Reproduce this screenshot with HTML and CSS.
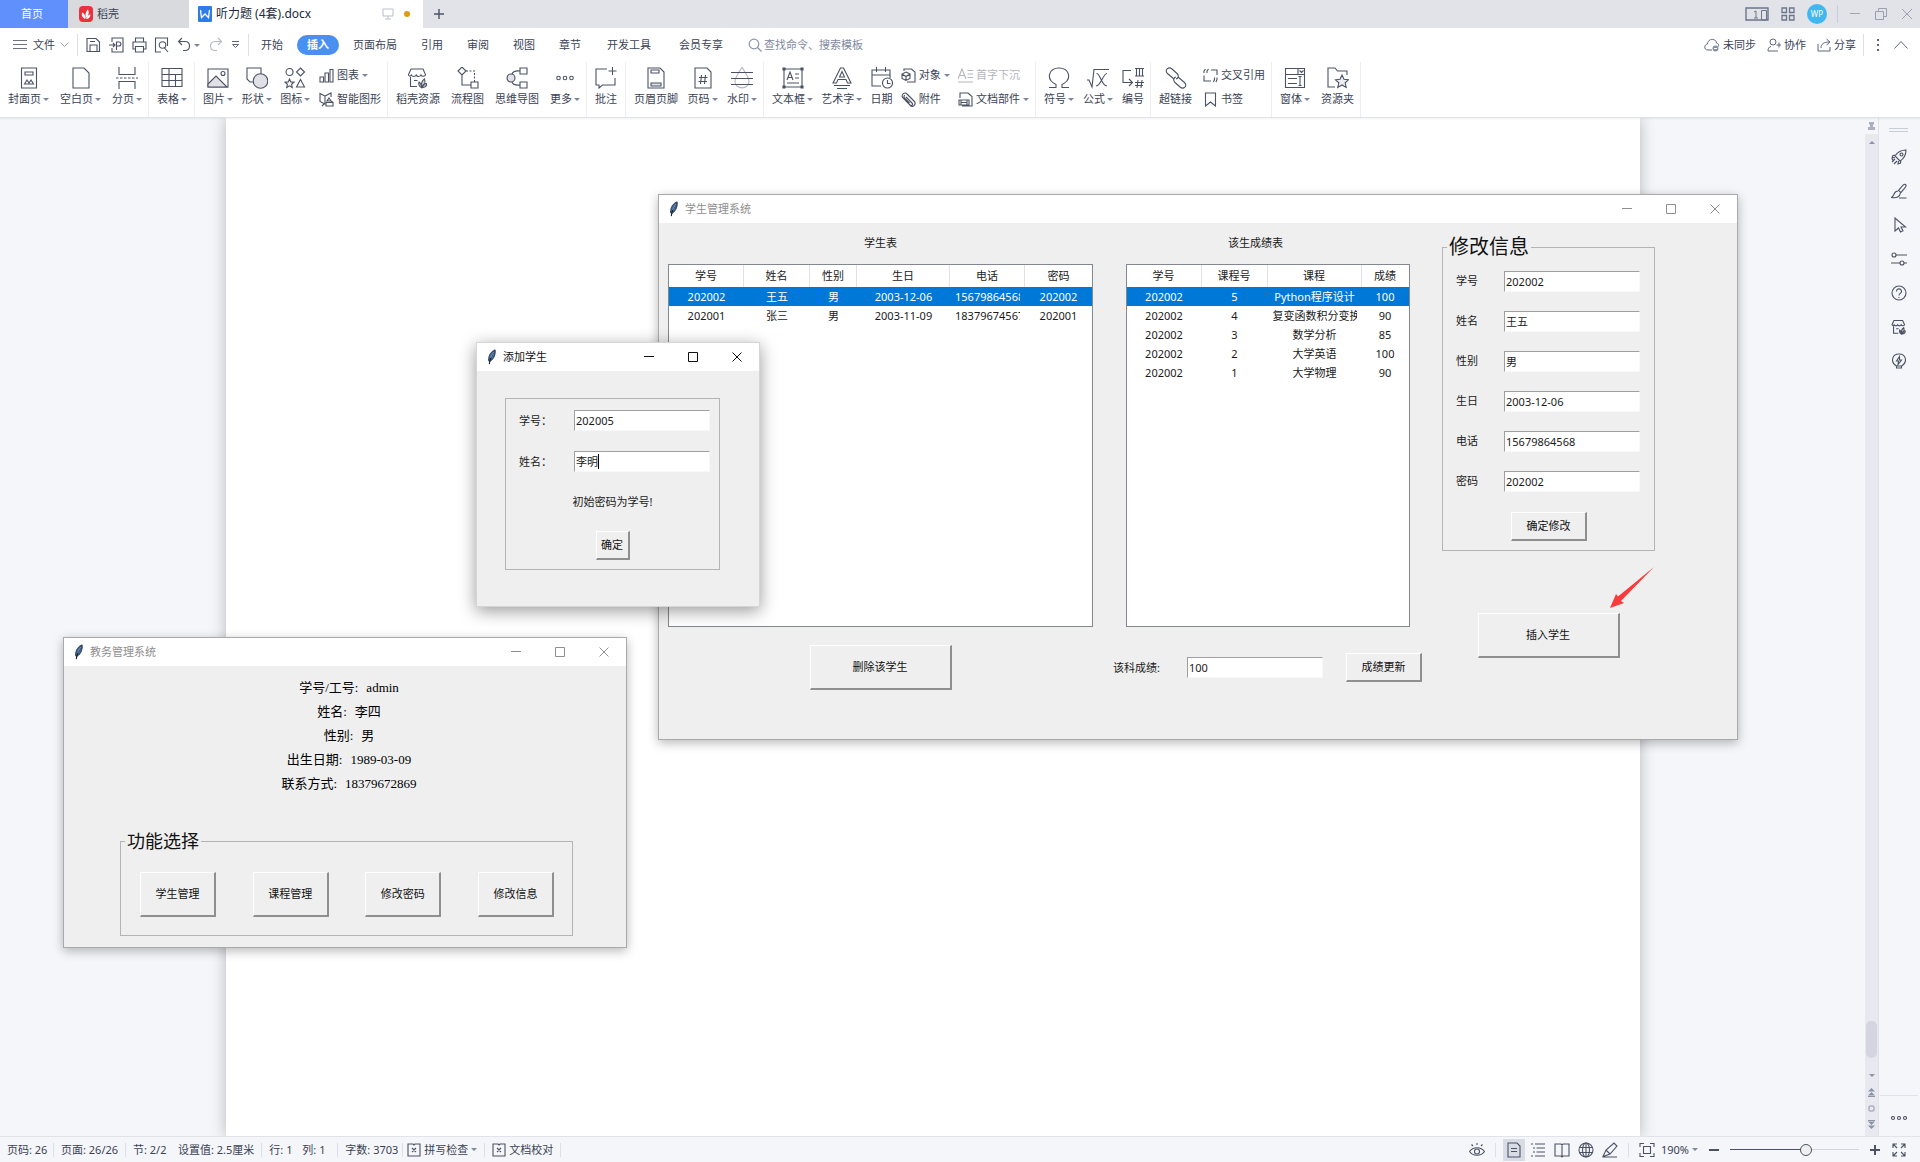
FILE: index.html
```html
<!DOCTYPE html>
<html lang="zh-CN">
<head>
<meta charset="utf-8">
<title>听力题 (4套).docx</title>
<link rel="stylesheet" href="styles.css">
</head>
<body>
<svg width="0" height="0" class="defs" aria-hidden="true">
  <symbol id="feather" viewBox="0 0 12 18"><path d="M9.500 1C5 2.500 2 7 2.200 13l.6 1C6.500 13.500 10.500 7 9.500 1z" fill="#3f6a9c" stroke="#1c2c44" stroke-width="1"/><path d="M8.500 3C5.500 7 3.600 11 3 17" fill="none" stroke="#16202e" stroke-width="1.200"/><path d="M8.200 3.500C6 6 5 8.500 4.600 10" fill="none" stroke="#9fc0e0" stroke-width="1"/></symbol>
  <symbol id="store" viewBox="0 0 22 22"><path d="M4 2h12l2.500 5.500c0 2-3.500 2.500-4.500.5-1 2-4 2-4.800 0-1 2-4 2-4.900 0C3.200 10 1.500 9 1.500 7.500zM3.500 10v9.500H10M7 13.500h3.500"/><path d="M14.500 20.500c-2.500-1-3-3.500-2.500-5.500 1.500.8 2.300 2 2.500 5.500zc-.5-4 .5-7 3-8.500 1 3 0 6.500-3 8.500zc1-2.500 2.500-4 5-4 .5 2.500-2 4.500-5 4z" fill="#cfd3da"/></symbol>
</svg>

<header class="tabs-bar">
  <a class="home-tab" href="#">首页</a>
  <a class="doc-tab" href="#"><svg class="i14" viewBox="0 0 14 18"><rect y="1" width="14" height="16" rx="4" fill="#e9323b"/><path d="M6.500 14C3 13 2.500 9.500 3 7.500 5.500 8.500 6.500 10 6.500 14zM6.800 13C6 8.500 7.500 5.500 9 4.500c1.500 3 .5 6.500-2.200 8.500zM7.200 14c1-3 2.500-4.500 4.300-4.500 0 2.500-2 4.500-4.300 4.500z" fill="#fff"/></svg>稻壳</a>
  <a class="doc-tab active" href="#"><svg class="i14" viewBox="0 0 14 18"><rect y="1" width="14" height="16" rx="1" fill="#2f7be8"/><path d="M2.500 5l1 7.500L7 9l3.500 3.500 1-7.500" fill="none" stroke="#fff" stroke-width="1.300"/></svg><span>听力题 (4套).docx</span>
    <svg class="i12 push" viewBox="0 0 12 12" fill="none" stroke="#b9bfcc"><path d="M1 1h10v7H1zM6 8v3M3 11h6"/></svg><i class="dot"></i></a>
  <button class="plain new-tab" aria-label="新建"><svg width="12" height="12" viewBox="0 0 12 12" stroke="#4b5468" stroke-width="1.400"><path d="M6 1v10M1 6h10"/></svg></button>
  <div class="win-tools">
    <svg width="24" height="16" viewBox="0 0 24 16" fill="none" stroke="#6b768c"><path d="M1 2h22v12H1z" stroke-width="1.400"/><path d="M16.500 4.500h5V14h-5zM9 6l2-1v7M9 12h4"/></svg>
    <svg width="14" height="14" viewBox="0 0 14 14" fill="none" stroke="#6b768c" stroke-width="1.300"><path d="M1 1h4.500v4.500H1zM8.500 1H13v4.500H8.500zM1 8.500h4.500V13H1zM8.500 8.500H13V13H8.500z"/></svg>
    <span class="avatar">WP</span>
    <i class="vline"></i>
    <button class="plain" aria-label="最小化"><svg width="12" height="12" viewBox="0 0 12 12" stroke="#a0a8b8"><path d="M1 5.500h10"/></svg></button>
    <button class="plain" aria-label="还原"><svg width="12" height="12" viewBox="0 0 12 12" fill="none" stroke="#98a1b3"><path d="M.5 3.500h8v8h-8zM3.500 3.500v-3h8v8h-3"/></svg></button>
    <button class="plain" aria-label="关闭"><svg width="12" height="12" viewBox="0 0 12 12" stroke="#98a1b3"><path d="M1 1l10 10M11 1L1 11"/></svg></button>
  </div>
</header>

<nav class="menu-bar">
  <div class="quick">
    <button class="plain file"><svg width="15" height="12" viewBox="0 0 15 12" stroke="#6a7284"><path d="M0 1.500h14M0 5.500h14M0 9.500h14"/></svg>文件<svg width="9" height="6" viewBox="0 0 9 6" fill="none" stroke="#9aa2b2"><path d="M.5.500l4 4 4-4"/></svg></button>
    <i class="vline"></i>
    <button class="plain" aria-label="保存"><svg class="q" viewBox="0 0 15 16"><path d="M1 1.500h9l3.500 3.500v9.500H1zM4 14.500V8h7v6.500M4 4.500h5"/></svg></button>
    <button class="plain" aria-label="输出为PDF"><svg class="q" viewBox="0 0 15 16"><path d="M3 5V1h11v14H3v-4M0 8h6M4 6l2 2-2 2M7.500 13V5h2.500c2.500 0 2.500 4 0 4H8"/></svg></button>
    <button class="plain" aria-label="打印"><svg class="q" viewBox="0 0 15 16"><path d="M3.500 5V1h8v4M3.500 12H1V5h13v7h-2.500M3.500 9.500h8V15h-8z"/></svg></button>
    <button class="plain" aria-label="打印预览"><svg class="q" viewBox="0 0 15 16"><path d="M7 15H1.500V1h12v8"/><circle cx="8.500" cy="8" r="3.300"/><path d="M10.500 11l3.500 4"/></svg></button>
    <button class="plain" aria-label="撤消"><svg class="q" viewBox="0 0 15 16"><path d="M5 1L1.500 4.500 5 8M2 4.500h6c6 0 6 9 0 9H6"/></svg><i class="caret"></i></button>
    <button class="plain faded" aria-label="恢复"><svg class="q" viewBox="0 0 15 16"><path d="M10 1l3.500 3.500L10 8M13 4.500H7c-6 0-6 9 0 9h2"/></svg></button>
    <button class="plain" aria-label="自定义"><svg width="9" height="8" viewBox="0 0 9 8" fill="none" stroke="#5d667a"><path d="M1 .5h7M1.500 3.500h6l-3 3z"/></svg></button>
    <i class="vline"></i>
  </div>
  <div class="menu-tabs">
    <a href="#">开始</a><a href="#" class="current"><b>插入</b></a><a href="#">页面布局</a><a href="#">引用</a><a href="#">审阅</a><a href="#">视图</a><a href="#">章节</a><a href="#" class="wide">开发工具</a><a href="#" class="wide">会员专享</a>
  </div>
  <label class="search"><svg width="14" height="14" viewBox="0 0 14 14" fill="none" stroke="#8c95a8" stroke-width="1.200"><circle cx="6" cy="6" r="4.800"/><path d="M9.500 9.500l4 4"/></svg><input type="text" placeholder="查找命令、搜索模板" aria-label="查找命令、搜索模板"></label>
  <div class="share">
    <button class="plain"><svg class="i16" viewBox="0 0 16 14"><path d="M8 12H4C-.5 12 0 6.500 3.500 6 4 0 12 0 12.500 5c2 .5 2.500 2 2 3.500"/><circle cx="11.500" cy="10.500" r="3" fill="#8892ab" stroke="none"/><path d="M10 10.500h3" stroke="#fff"/></svg>未同步</button>
    <button class="plain"><svg class="i14n" viewBox="0 0 14 14"><circle cx="6" cy="4" r="3"/><path d="M4 8.500C1.500 9 1 11 1 13h10M12 4.500v5M9.500 7h5"/></svg>协作</button>
    <button class="plain"><svg class="i14n" viewBox="0 0 14 14"><path d="M1 6v7h12V9M4 10c0-4 3-6 8-6M9.500 1L13 4 9.500 7"/></svg>分享</button>
    <i class="vline"></i>
    <button class="plain" aria-label="更多"><svg width="4" height="14" viewBox="0 0 4 14" fill="#5d667a"><path d="M1 1h2v2H1zM1 6h2v2H1zM1 11h2v2H1z"/></svg></button>
    <button class="plain" aria-label="收起"><svg width="14" height="8" viewBox="0 0 14 8" fill="none" stroke="#5d667a"><path d="M.5 7.500l6.500-7 6.500 7"/></svg></button>
  </div>
</nav>

<div class="ribbon">
  <section>
    <button class="tool"><svg viewBox="0 0 22 22"><path d="M3.500 1h15v20h-15z"/><path d="M7 5h8v3H7zM6.500 17l2.500-4 2 3 2-3 2.500 4z"/></svg><span>封面页<i class="caret"></i></span></button>
    <button class="tool"><svg viewBox="0 0 22 22"><path d="M3 1h11l5 5v15H3z"/></svg><span>空白页<i class="caret"></i></span></button>
    <button class="tool"><svg viewBox="0 0 22 22"><path d="M3 0v7.500h16V0M3 22v-7.500h16V22"/><path d="M0 11h22" stroke-dasharray="2.500 1.500"/></svg><span>分页<i class="caret"></i></span></button>
  </section>
  <section>
    <button class="tool"><svg viewBox="0 0 22 22"><path d="M1 1.500h20v18H1zM1 7.500h20M1 13.500h20M8 1.500v18M14.500 7.500v12"/></svg><span>表格<i class="caret"></i></span></button>
  </section>
  <section>
    <button class="tool"><svg viewBox="0 0 22 22"><path d="M1 2h20v18H1z"/><circle cx="16" cy="6.500" r="2"/><path d="M1 17l8-8 11 11H1z" fill="#dfe1e6"/></svg><span>图片<i class="caret"></i></span></button>
    <button class="tool"><svg viewBox="0 0 22 22"><path d="M1 1h14v14H4l-3-3z"/><circle cx="14.500" cy="14" r="7.300" fill="#dfe1e6"/></svg><span>形状<i class="caret"></i></span></button>
    <button class="tool"><svg viewBox="0 0 22 22"><circle cx="5.500" cy="5" r="3.500"/><path d="M16.500 1l4 4-4 4-4-4zM16.500 12.500l4 7.500h-8zM5.500 12l1.300 2.900 3.200.3-2.400 2.100.7 3.200-2.800-1.700-2.800 1.700.7-3.200L1 15.200l3.200-.3z"/></svg><span>图标<i class="caret"></i></span></button>
    <div class="stack">
      <button class="mini"><svg viewBox="0 0 15 15"><path d="M1 9h3.500v5H1zM6 5h3.500v9H6zM11 1.500h3V14h-3z"/></svg>图表<i class="caret"></i></button>
      <button class="mini"><svg viewBox="0 0 15 15"><path d="M1 1.500l5 2.500v8L1 9.500zM6 4l6-3v4M1 1.500v6M5 12l-2 2"/><path d="M10 6l2 3h-4zM7 10.500h7V14H7zM12 9l2 1.500"/></svg>智能图形</button>
    </div>
  </section>
  <section>
    <button class="tool"><svg><use href="#store"/></svg><span>稻壳资源</span></button>
    <button class="tool"><svg viewBox="0 0 22 22"><path d="M5 0l4 4-4 4-4-4zM14 15h7v6h-7zM5 8v10h9"/><path d="M9 4h8.500v11" stroke-dasharray="2 1.500"/></svg><span>流程图</span></button>
    <button class="tool"><svg viewBox="0 0 22 22"><circle cx="5" cy="11" r="4" fill="#dfe1e6"/><path d="M14 1h7v6h-7zM14 15h7v6h-7zM6 7c1-3 4-3.500 8-3M6 15c1 3 4 3.500 8 3"/></svg><span>思维导图</span></button>
    <button class="tool"><svg viewBox="0 0 22 22"><circle cx="4.500" cy="11" r="1.800"/><circle cx="11" cy="11" r="1.800"/><circle cx="17.500" cy="11" r="1.800"/></svg><span>更多<i class="caret"></i></span></button>
  </section>
  <section>
    <button class="tool"><svg viewBox="0 0 22 22"><path d="M12 2H1v16h3v3l3.500-3H20v-7M17.500 0v8M13.500 4h8"/></svg><span>批注</span></button>
  </section>
  <section>
    <button class="tool"><svg viewBox="0 0 22 22"><path d="M3 1h12l4 4v16H3zM6 3h8v3H6z"/><path d="M6 16h10v3H6z" fill="#dfe1e6"/></svg><span>页眉页脚</span></button>
    <button class="tool"><svg viewBox="0 0 22 22"><path d="M3 1h12l4 4v16H3zM9.500 8l-1 9M13.500 8l-1 9M7 10.500h8.500M6.500 14.500H15"/></svg><span>页码<i class="caret"></i></span></button>
    <button class="tool"><svg viewBox="0 0 22 22"><path d="M11 0c-3 6-7 10-7 14.500 0 8.500 14 8.500 14 0C18 10 14 6 11 0z" stroke="#b4b8c2"/><path d="M0 5.500h22M0 11.500h22M0 17.500h22"/></svg><span>水印<i class="caret"></i></span></button>
  </section>
  <section>
    <button class="tool"><svg viewBox="0 0 22 22"><path d="M2 2h18v18H2z"/><path d="M5 13l3-8 3 8M6 10.500h4M13 7h4M13 11h4M5 16h12"/><path d="M1 1h2v2H1zM19 1h2v2h-2zM1 19h2v2H1zM19 19h2v2h-2z" fill="#4a5264"/></svg><span>文本框<i class="caret"></i></span></button>
    <button class="tool"><svg viewBox="0 0 22 22"><path d="M2 16L9.500 1h3L20 16h-3.500L15 12.500H7L5.500 16zM8.500 10L11 4.500l2.500 5.500zM3 18.500h16M6 21.500h10"/></svg><span>艺术字<i class="caret"></i></span></button>
    <button class="tool"><svg viewBox="0 0 22 22"><path d="M10 19H1V3h18v8M1 8h18M5.500 0v5M14.500 0v5"/><circle cx="16.500" cy="16" r="5"/><path d="M16.500 13v3.500h3"/></svg><span>日期</span></button>
    <div class="stack">
      <button class="mini"><svg viewBox="0 0 15 15"><path d="M3 3V1h7.500L14 4v10H6"/><path d="M5 4l4 2v4.500L5 12.500 1 10.500V6zM1 6l4 2.500L9 6M5 8.500v4"/></svg>对象<i class="caret"></i></button>
      <button class="mini"><svg viewBox="0 0 15 15"><path d="M5 5l6 6c1.500 1.500-.5 3.500-2 2L2 6C-.5 3 3.500-.5 6 2l7 7c3 3-1 7-4 4.500M4 3.500c-1 0-1.500 1.500-.5 2.500l5 5"/></svg>附件</button>
    </div>
    <div class="stack">
      <button class="mini" disabled><svg viewBox="0 0 15 15"><path d="M0 11l4-10 4 10M1.500 7.500h5M9.500 2.500H15M9.500 6H15M9.500 9.500H15M0 14h15"/></svg>首字下沉</button>
      <button class="mini"><svg viewBox="0 0 15 15"><path d="M2 6V1h8l4 3.500V14H4M1 8h10v5H1zM3 8v5M9 8v5M3 10.500h6"/></svg>文档部件<i class="caret"></i></button>
    </div>
  </section>
  <section>
    <button class="tool"><svg viewBox="0 0 22 22"><path d="M1 20.500h7v-3C-3 12 1 1 11 1s14 11 3 16.500v3h7"/></svg><span>符号<i class="caret"></i></span></button>
    <button class="tool"><svg viewBox="0 0 22 22"><path d="M0 13h2l3 7L7 2.500h15M9.500 6.500c4 0 5 12.500 10.500 12.500M20 6.500c-4 0-6 12.500-11 12.500"/></svg><span>公式<i class="caret"></i></span></button>
    <button class="tool"><svg viewBox="0 0 22 22"><path d="M9 3.500H1v12h9M7 12l3.500 3.500L7 19M13 1.500h9M13 9h9M14.500 1.500V9M17.500 1.500V9M20.500 1.500V9M16 13l-1 8M20 13l-1 8M13 15.500h9M13 18.500h8"/></svg><span>编号</span></button>
  </section>
  <section>
    <button class="tool"><svg viewBox="0 0 22 22"><path d="M9 12L2.500 6.500C-1 3 3.500-1 7 2l5 4.500c2.500 2.500 1 5-1 5.500"/><path d="M13 10l6.500 5.500c3.500 3.500-1 7.500-4.500 4.500l-5-4.500c-2.500-2.500-1-5 1-5.500"/></svg><span>超链接</span></button>
    <div class="stack">
      <button class="mini"><svg viewBox="0 0 15 15"><path d="M1 5V3l1.500-2M4 5V3l1.500-2M8 2h6v5M1 7.500V13h7M11.500 9.500v2L10.500 14M14 9.500v2L13 14"/></svg>交叉引用</button>
      <button class="mini"><svg viewBox="0 0 15 15"><path d="M2.500 1h10v13l-5-4-5 4z"/></svg>书签</button>
    </div>
  </section>
  <section>
    <button class="tool"><svg viewBox="0 0 22 22"><path d="M1.500 1.500h19v19h-19zM1.500 7.500h19M14 1.500v6M15.500 3.500l2 2 2-2M4 11.500h9M4 16.500h9M16 9.500v9M14.500 9.500h3M14.500 18.500h3"/></svg><span>窗体<i class="caret"></i></span></button>
    <button class="tool"><svg viewBox="0 0 22 22"><path d="M8 20H1V1h7l2.500 3H20v4"/><path d="M15 8l2 4.300 4.500.5-3.300 3 1 4.700L15 18l-4.200 2.500 1-4.700-3.300-3 4.500-.5z" fill="#eceef1"/></svg><span>资源夹</span></button>
  </section>
</div>

<main class="workspace">
  <div class="canvas">
    <div class="page"></div>

    <section class="win win-students">
      <div class="title"><svg class="feather"><use href="#feather"/></svg><span>学生管理系统</span>
        <button class="plain" aria-label="最小化"><svg viewBox="0 0 10 10"><path d="M0 4.500h10"/></svg></button><button class="plain" aria-label="最大化"><svg viewBox="0 0 10 10"><path d="M.5.500h9v9h-9z"/></svg></button><button class="plain" aria-label="关闭"><svg viewBox="0 0 10 10"><path d="M.5.500l9 9M9.500.5l-9 9"/></svg></button></div>
      <div class="student-body">
        <div class="col">
          <h2>学生表</h2>
          <div class="tree"><table>
            <colgroup><col style="width:75px"><col style="width:66px"><col style="width:47px"><col style="width:93px"><col style="width:75px"><col></colgroup>
            <thead><tr><th>学号</th><th>姓名</th><th>性别</th><th>生日</th><th>电话</th><th>密码</th></tr></thead>
            <tbody>
              <tr class="sel"><td>202002</td><td>王五</td><td>男</td><td>2003-12-06</td><td><div class="cut">15679864568</div></td><td>202002</td></tr>
              <tr><td>202001</td><td>张三</td><td>男</td><td>2003-11-09</td><td><div class="cut">18379674567</div></td><td>202001</td></tr>
            </tbody></table></div>
          <button class="tk big">删除该学生</button>
        </div>
        <div class="col score-col">
          <h2>该生成绩表</h2>
          <div class="tree scores"><table>
            <colgroup><col style="width:75px"><col style="width:66px"><col style="width:94px"><col></colgroup>
            <thead><tr><th>学号</th><th>课程号</th><th>课程</th><th>成绩</th></tr></thead>
            <tbody>
              <tr class="sel"><td>202002</td><td>5</td><td>Python程序设计</td><td>100</td></tr>
              <tr><td>202002</td><td>4</td><td><div class="cut">复变函数积分变换</div></td><td>90</td></tr>
              <tr><td>202002</td><td>3</td><td>数学分析</td><td>85</td></tr>
              <tr><td>202002</td><td>2</td><td>大学英语</td><td>100</td></tr>
              <tr><td>202002</td><td>1</td><td>大学物理</td><td>90</td></tr>
            </tbody></table></div>
          <div class="score-row"><label for="score">该科成绩:</label><input class="entry" id="score" value="100"><button class="tk mid">成绩更新</button></div>
        </div>
        <div class="col edit-col">
          <fieldset class="edit"><legend>修改信息</legend>
            <div class="field"><label for="e1">学号</label><input class="entry" id="e1" value="202002"></div>
            <div class="field"><label for="e2">姓名</label><input class="entry" id="e2" value="王五"></div>
            <div class="field"><label for="e3">性别</label><input class="entry" id="e3" value="男"></div>
            <div class="field"><label for="e4">生日</label><input class="entry" id="e4" value="2003-12-06"></div>
            <div class="field"><label for="e5">电话</label><input class="entry" id="e5" value="15679864568"></div>
            <div class="field"><label for="e6">密码</label><input class="entry" id="e6" value="202002"></div>
            <button class="tk mid">确定修改</button>
          </fieldset>
          <button class="tk big">插入学生</button>
          <svg class="arrow" viewBox="0 0 44 42"><path d="M0 41L6 27l2 2.500L44 0 11 34l3 2z" fill="#fb3b3b"/></svg>
        </div>
      </div>
    </section>

    <section class="win win-add">
      <div class="title"><svg class="feather"><use href="#feather"/></svg><span>添加学生</span>
        <button class="plain" aria-label="最小化"><svg viewBox="0 0 10 10"><path d="M0 4.500h10"/></svg></button><button class="plain" aria-label="最大化"><svg viewBox="0 0 10 10"><path d="M.5.500h9v9h-9z"/></svg></button><button class="plain" aria-label="关闭"><svg viewBox="0 0 10 10"><path d="M.5.500l9 9M9.500.5l-9 9"/></svg></button></div>
      <fieldset class="add-form">
        <div class="field"><label for="a1">学号：</label><input class="entry" id="a1" value="202005"></div>
        <div class="field"><label for="a2">姓名：</label><div class="entry typing"><input id="a2" value="李明" size="2"><i class="cursor"></i></div></div>
        <p>初始密码为学号!</p>
        <button class="tk small">确定</button>
      </fieldset>
    </section>

    <section class="win win-main">
      <div class="title"><svg class="feather"><use href="#feather"/></svg><span>教务管理系统</span>
        <button class="plain" aria-label="最小化"><svg viewBox="0 0 10 10"><path d="M0 4.500h10"/></svg></button><button class="plain" aria-label="最大化"><svg viewBox="0 0 10 10"><path d="M.5.500h9v9h-9z"/></svg></button><button class="plain" aria-label="关闭"><svg viewBox="0 0 10 10"><path d="M.5.500l9 9M9.500.5l-9 9"/></svg></button></div>
      <dl class="profile">
        <div><dt>学号/工号:</dt><dd>admin</dd></div>
        <div><dt>姓名:</dt><dd>李四</dd></div>
        <div><dt>性别:</dt><dd>男</dd></div>
        <div><dt>出生日期:</dt><dd>1989-03-09</dd></div>
        <div><dt>联系方式:</dt><dd>18379672869</dd></div>
      </dl>
      <fieldset class="functions"><legend>功能选择</legend>
        <div class="fn-row"><button class="tk">学生管理</button><button class="tk">课程管理</button><button class="tk">修改密码</button><button class="tk">修改信息</button></div>
      </fieldset>
    </section>
  </div>

  <div class="scroll">
    <div class="ruler-toggle"><svg width="9" height="10" viewBox="0 0 9 10" fill="#a9b0c0"><path d="M2 1h5v2L6 4v2h2v3H1V6h2V4L2 3z"/></svg></div>
    <div class="track">
      <i class="up"></i><span class="thumb"></span><i class="down"></i>
      <svg width="9" height="9" viewBox="0 0 9 9" fill="#8a93a8"><path d="M4.500 0L8 3.500H1zM4.500 4L8 7.500H1zM1 8h7v1H1z"/></svg>
      <svg width="9" height="9" viewBox="0 0 9 9" fill="none" stroke="#8a93a8"><rect x="2" y="2" width="5" height="5" rx="1"/></svg>
      <svg width="9" height="9" viewBox="0 0 9 9" fill="#8a93a8"><path d="M1 0h7v1H1zM1 1.500h7L4.500 5zM1 5.500h7L4.500 9z"/></svg>
    </div>
  </div>
  <aside class="side">
    <i class="grip"></i>
    <button class="plain" aria-label="火箭"><svg viewBox="0 0 16 16"><path d="M15 1C10 1 6.500 3 4 7l5 5c4-2.500 6-6 6-11zM5 6L2 6.500 1 9l3-.5M10 11l-.5 3-2.500 1 .5-3M4 10l-3 3M6 12l-3 3M2 10l-1 1"/><circle cx="10.500" cy="5.500" r="1.500"/></svg></button>
    <button class="plain" aria-label="样式"><svg viewBox="0 0 16 16"><path d="M14.500 1.500c1.500 1 .5 2-4.500 8L7.500 7.500C12 2 13 .5 14.500 1.500zM7 8C2.500 8 4 12 .5 14.500c5 1 8.500-.5 9-5M8 15h7.500"/></svg></button>
    <button class="plain" aria-label="选择"><svg viewBox="0 0 16 16"><path d="M4 1v13l3.500-3 2 4 2.500-1.200-2-3.800h4.500z"/></svg></button>
    <button class="plain" aria-label="设置"><svg viewBox="0 0 16 16"><circle cx="3" cy="4" r="2"/><path d="M5 4h11M0 12h9M13 12h3"/><circle cx="11" cy="12" r="2"/></svg></button>
    <button class="plain" aria-label="帮助"><svg viewBox="0 0 16 16"><circle cx="8" cy="8" r="7"/><path d="M5.500 6.500c0-4 5.500-3 5 .2C10.200 8.500 8 8.500 8 10.500M8 12v1"/></svg></button>
    <button class="plain" aria-label="稻壳"><svg class="store"><use href="#store"/></svg></button>
    <button class="plain" aria-label="推荐"><svg viewBox="0 0 16 16"><path d="M5.500 13C-1 9 1 1 8 1s9 8 2.500 12v2h-5zM5.500 13h5M8.500 3.500L5.500 8h2l-.5 3.500L10.500 7h-2z"/></svg></button>
    <button class="plain more" aria-label="更多"><svg viewBox="0 0 16 16"><circle cx="2" cy="8" r="1.500"/><circle cx="8" cy="8" r="1.500"/><circle cx="14" cy="8" r="1.500"/></svg></button>
  </aside>
</main>

<footer class="status">
  <span class="s47">页码: 26</span><i class="vline"></i>
  <span class="s72">页面: 26/26</span><i class="vline"></i>
  <span class="s46">节: 2/2</span><span>设置值: 2.5厘米</span><i class="vline"></i>
  <span class="s33">行: 1</span><span class="s35">列: 1</span><i class="vline"></i>
  <span>字数: 3703</span><i class="vline tight"></i>
  <button class="plain"><svg viewBox="0 0 14 14"><path d="M1 1h5l1 1 1-1h5v12H1zM5 5l4 4M9 5L5 9"/></svg>拼写检查<i class="caret"></i></button><i class="vline"></i>
  <button class="plain"><svg viewBox="0 0 14 14"><path d="M1 1h5l1 1 1-1h5v12H1zM5 5l4 4M9 5L5 9"/></svg>文档校对</button><i class="vline"></i>
  <div class="view-tools">
    <button class="plain" aria-label="护眼模式"><svg viewBox="0 0 16 16"><path d="M.5 9.500C4 4.500 12 4.500 15.500 9.500 12 14.500 4 14.500.5 9.500zM8 1v2M2.500 2.500L4 4M13.500 2.500L12 4"/><circle cx="8" cy="9.500" r="2.500"/></svg></button>
    <i class="vline"></i>
    <button class="plain on" aria-label="页面视图"><svg viewBox="0 0 16 16"><path d="M2 1h9l3 3v11H2zM5 6.500h6M5 9.500h6"/></svg></button>
    <button class="plain" aria-label="大纲"><svg viewBox="0 0 16 16"><path d="M1 2h2M5 2h10M3 6h2M6.500 6H15M3 10h2M6.500 10H15M1 14h2M5 14h10"/></svg></button>
    <button class="plain" aria-label="阅读版式"><svg viewBox="0 0 16 16"><path d="M1 2h6l1 1 1-1h6v12H9l-1 1-1-1H1zM8 3v11"/></svg></button>
    <button class="plain" aria-label="Web版式"><svg viewBox="0 0 16 16"><circle cx="8" cy="8" r="7"/><ellipse cx="8" cy="8" rx="3.500" ry="7"/><path d="M1.500 5.500h13M1.500 10.500h13M8 1v14"/></svg></button>
    <button class="plain" aria-label="写作模式"><svg viewBox="0 0 16 16"><path d="M1 14.500L4 8l8-7 3 3-7 8zM4 8l4 4M1 15h14"/></svg></button>
    <i class="vline"></i>
    <button class="plain" aria-label="适合页面"><svg viewBox="0 0 16 16"><path d="M1 5V1.500h4M11 1.500h4V5M15 11v3.500h-4M5 14.500H1V11M4.500 4.500h7v7h-7z"/></svg></button>
    <button class="plain pct">190%<i class="caret"></i></button>
    <button class="plain" aria-label="缩小"><svg viewBox="0 0 16 16"><path d="M3 8h10" stroke-width="2"/></svg></button>
    <input class="zoom" type="range" min="0" max="100" value="60" aria-label="缩放">
    <button class="plain" aria-label="放大"><svg viewBox="0 0 16 16"><path d="M3 8h10M8 3v10" stroke-width="2"/></svg></button>
    <button class="plain" aria-label="全屏"><svg viewBox="0 0 16 16"><path d="M2 6V2h4M2 2l4 4M10 2h4v4M14 2l-4 4M14 10v4h-4M14 14l-4-4M6 14H2v-4M2 14l4-4"/></svg></button>
  </div>
</footer>
</body>
</html>
```

FILE: styles.css
```css
* { box-sizing: border-box; }
html, body { height: 100%; margin: 0; }
body {
  display: flex; flex-direction: column; overflow: hidden;
  font: 11px/16px "Noto Sans", "Noto Sans CJK SC", sans-serif;
  color: #3a4254; background: #fff;
}
button, input { font: inherit; color: inherit; }
a { color: inherit; text-decoration: none; }
svg { display: block; flex: none; }
.defs { position: absolute; }
.plain { display: flex; align-items: center; border: 0; padding: 0; background: none; white-space: nowrap; }
.vline { width: 1px; height: 22px; background: #dcdfe5; flex: none; }
.caret { border: 3px solid transparent; border-top: 3px solid #7d879c; border-bottom: 0; width: 0; flex: none; }

/* document tabs */
.tabs-bar { display: flex; height: 28px; background: #e1e3e8; flex: none; }
.home-tab { width: 68px; padding-right: 4px; background: #5f90fb; color: #fff; text-align: center; line-height: 28px; }
.doc-tab { display: flex; align-items: center; gap: 4px; width: 121px; padding: 0 10px 0 11px; background: #d9dade; }
.doc-tab.active { width: 234px; padding: 0 13px 0 9px; background: #fff; font-size: 12px; color: #222a3a; }
.i14 { width: 14px; height: 18px; }
.i12 { width: 12px; height: 12px; }
.push { margin-left: auto; }
.dot { width: 6px; height: 6px; margin-left: 6px; border-radius: 3px; background: #e09a12; }
.new-tab { padding: 0 10px; }
.win-tools { display: flex; align-items: center; gap: 12px; margin-left: auto; padding-right: 6px; }
.win-tools .plain { padding: 0 1px; }
.avatar { width: 20px; height: 20px; border-radius: 10px; background: #41b7f0; color: #fff; font-size: 8px; line-height: 20px; text-align: center; }
.win-tools .vline { height: 18px; margin: 0 -2px; background: #c9cdd6; }

/* menu */
.menu-bar { display: flex; align-items: center; height: 34px; flex: none; }
.quick { display: flex; align-items: center; gap: 7px; padding-left: 13px; width: 249px; justify-content: space-between; }
.quick .file { gap: 5px; }
.quick .caret { margin-left: 2px; }
.q { width: 15px; height: 16px; fill: none; stroke: #4a5264; stroke-width: 1.1; }
.faded { opacity: .4; }
.menu-tabs { display: flex; align-items: center; }
.menu-tabs a { padding: 0 12px; line-height: 20px; }
.menu-tabs a.wide { padding: 0 14px; }
.menu-tabs .current { margin: 0 2px; padding: 0 10px; border-radius: 10px; background: #4a90f0; color: #fff; }
.search { display: flex; align-items: center; gap: 2px; margin-left: 11px; }
.search input { width: 120px; border: 0; padding: 0; background: none; }
.search input::placeholder { color: #7f89a0; opacity: 1; }
.share { display: flex; align-items: center; gap: 11px; margin-left: auto; padding-right: 12px; }
.share .plain { gap: 3px; }
.share .vline { margin: 0 1px 0 -4px; }
.share .plain:last-child { margin-left: 3px; }
.i16 { width: 16px; height: 14px; fill: none; stroke: #5d667a; }
.i14n { width: 14px; height: 14px; fill: none; stroke: #5d667a; }

/* ribbon */
.ribbon {
  display: grid; grid-template-columns: 149px 46px 193px 199px 39px 138px 272px 115px 121px 89px;
  height: 56px; flex: none; border-bottom: 1px solid #dfe2e7; position: relative; z-index: 2;
  box-shadow: 0 1px 2px rgba(0,0,0,.06); background: #fff;
}
.ribbon section { display: flex; justify-content: space-between; padding: 0 6px 0 8px; border-right: 1px solid #eceef1; }
.tool { display: flex; flex-direction: column; align-items: center; gap: 2px; padding: 5px 0 0; border: 0; background: none; white-space: nowrap; }
.tool span { display: flex; align-items: center; gap: 2px; }
.tool svg { width: 22px; height: 22px; }
.tool svg, .mini svg { fill: none; stroke: #4a5264; stroke-width: 1.1; }
.stack { display: flex; flex-direction: column; padding-top: 1px; }
.mini { display: flex; align-items: center; gap: 3px; height: 24px; padding: 0; border: 0; background: none; white-space: nowrap; }
.mini svg { width: 15px; height: 15px; }
.mini:disabled { color: #b3b6bd; }
.mini:disabled svg { stroke: #b3b6bd; }

/* workspace */
.workspace { display: flex; flex: 1; min-height: 0; background: #f5f6f9; }
.canvas { position: relative; flex: 1; overflow: hidden; }
.page { width: calc(100% - 451px); height: 100%; margin: 0 auto; background: #fff; box-shadow: 0 0 14px rgba(60,66,80,.35); }
.scroll { display: flex; flex-direction: column; width: 14px; border-right: 1px solid #dfe1e7; }
.ruler-toggle { display: flex; align-items: center; justify-content: center; height: 16px; }
.track { display: flex; flex-direction: column; align-items: center; flex: 1; gap: 7px; padding: 7px 0; background: #e7e9ee; }
.track i { border: 3px solid transparent; }
.track .up { border-top: 0; border-bottom-color: #8a93a8; }
.track .down { border-bottom: 0; border-top-color: #8a93a8; margin: 9px 0 4px; }
.thumb { width: 11px; height: 37px; margin-top: auto; border-radius: 5px; background: #d3d6de; }
.side { display: flex; flex-direction: column; align-items: center; gap: 18px; width: 41px; padding: 10px 2px 0 0; }
.side svg { width: 16px; height: 16px; fill: none; stroke: #4a5264; stroke-width: 1.1; }
.side .store { stroke-width: 1.5; }
.side .grip { width: 19px; height: 4px; margin-bottom: -1px; border: solid #c8ccd4; border-width: 1px 0; }
.side .more { width: 38px; height: 41px; margin-top: auto; border-top: 1px solid #dfe2e8; justify-content: center; padding-top: 4px; }

/* desktop windows */
.win { position: absolute; border: 1px solid #a9a9a9; background: #efefef; color: #1a1a1a; box-shadow: 0 3px 10px rgba(0,0,0,.28); }
.title { display: flex; align-items: center; height: 28px; padding-left: 9px; background: #fff; color: #8e8e8e; }
.feather { width: 12px; height: 16px; margin-right: 5px; }
.title span { margin-right: auto; }
.title .plain { width: 44px; height: 28px; justify-content: center; }
.title .plain svg { width: 10px; height: 10px; fill: none; stroke: currentColor; }
.win fieldset { margin: 0; padding: 0; min-width: 0; border: 1px solid #b4b4b4; }
.win legend { margin-left: 4px; padding: 0 2px; line-height: 26px; color: #111; }
.tk {
  padding: 0; background: #efefef; border: solid; border-width: 1px 2px 2px 1px;
  border-color: #fff #8f8f8f #8f8f8f #fff; border-radius: 0; color: #111;
}
.tk.big { width: 142px; height: 45px; }
.tk.mid { width: 76px; height: 29px; }
.tk.small { width: 34px; height: 29px; }
.entry { width: 136px; height: 21px; padding: 0 1px; border: 1px solid; border-color: #9f9f9f #f8f8f8 #f8f8f8 #9f9f9f; border-radius: 0; background: #fff; }
.field { display: flex; justify-content: space-between; align-items: center; }

.win-students { left: 658px; top: 76px; width: 1080px; height: 546px; }
.student-body { display: flex; padding: 11px 0 0 9px; }
.col { display: flex; flex-direction: column; align-items: center; }
.col h2 { margin: 0 0 13px; font: inherit; line-height: 17px; }
.col + .col { margin-left: 20px; }
.score-col h2 { padding-right: 24px; }
.tree { width: 425px; height: 363px; border: 1px solid #828790; background: #fff; margin-bottom: 18px; }
.tree.scores { width: 284px; }
.tree table { width: 100%; table-layout: fixed; border-spacing: 0; text-align: center; }
.tree th { height: 22px; padding: 0; font-weight: normal; border-right: 1px solid #e2e2e2; }
.tree th:last-child { border-right: 0; }
.tree td { height: 19px; padding: 0 5px; white-space: nowrap; }
.tree .sel { background: #0078d7; color: #fff; }
.cut { overflow: hidden; text-align: left; }
.score-row { display: flex; align-items: center; width: 309px; height: 45px; }
.score-row label { width: 74px; }
.score-row .tk { margin-left: auto; }
.edit-col { position: relative; }
.edit { width: 213px; height: 317px; }
.edit legend { font-size: 20px; }
.edit .field { height: 20px; margin: 0 14px 20px 13px; }
.edit legend + .field { margin-top: 11px; }
.edit .field + .tk { display: block; margin: 21px auto 0 68px; }
.edit .field:last-of-type { margin-bottom: 0; }
.edit-col .big { margin-top: 62px; }
.arrow { position: absolute; left: 168px; top: 333px; width: 44px; height: 42px; }

.win-add { left: 476px; top: 224px; width: 284px; height: 265px; border-color: #d5d5d5; box-shadow: 0 4px 16px rgba(0,0,0,.4); }
.win-add .title { color: #111; }
.add-form.add-form { display: flex; flex-direction: column; align-items: center; gap: 20px; width: 215px; height: 172px; margin: 27px 0 0 28px; padding-top: 11px; }
.add-form .field { align-self: stretch; padding: 0 9px 0 13px; }
.add-form p { margin: 0; line-height: 20px; }
.add-form .tk { margin-top: -1px; }
.typing { display: flex; align-items: center; }
.typing input { width: 22px; border: 0; padding: 0; outline: 0; background: none; }
.cursor { width: 1px; height: 15px; background: #000; }

.win-main { left: 63px; top: 519px; width: 564px; height: 311px; }
.profile { margin: 10px 0 0 8px; font-family: "Liberation Serif", "Noto Sans CJK SC", serif; font-size: 13px; color: #000; }
.profile div { display: flex; justify-content: center; gap: 8px; line-height: 24px; }
.profile dd { margin: 0; }
.functions.functions { width: 453px; margin: 32px 0 0 56px; height: 108px; }
.functions legend { font-size: 18px; }
.fn-row { display: flex; justify-content: space-between; padding: 18px 18px 0 19px; }
.fn-row .tk { width: 76px; height: 45px; }

/* status bar */
.status { display: flex; align-items: center; gap: 7px; height: 26px; flex: none; padding-left: 7px; border-top: 1px solid #e0e3e8; background: #f5f6f9; white-space: nowrap; }
.status .vline { height: 14px; }
.status .plain { gap: 3px; }
.status .tight { margin: 0 -3px; }
.s47 { width: 39px; }
.s72 { width: 57px; }
.s46 { width: 38px; }
.s33 { width: 26px; }
.s35 { width: 28px; }
.status svg { width: 14px; height: 14px; fill: none; stroke: #4a5264; stroke-width: 1.1; }
.view-tools { display: flex; align-items: center; gap: 8px; margin-left: auto; padding-right: 13px; }
.view-tools .vline { margin: 0 2px; }
.view-tools svg { width: 16px; height: 16px; }
.view-tools .on { padding: 3px; margin: 0 -3px; background: #d8dde5; }
.view-tools .pct { margin-left: -2px; }
.zoom { appearance: none; width: 129px; height: 13px; margin: 0; background: linear-gradient(90deg, #4a5264 60%, #d3d6dc 60%) center / 100% 1px no-repeat; }
.zoom::-webkit-slider-thumb { appearance: none; width: 12px; height: 12px; border: 1px solid #4a5264; border-radius: 6px; background: #efefef; }
```
